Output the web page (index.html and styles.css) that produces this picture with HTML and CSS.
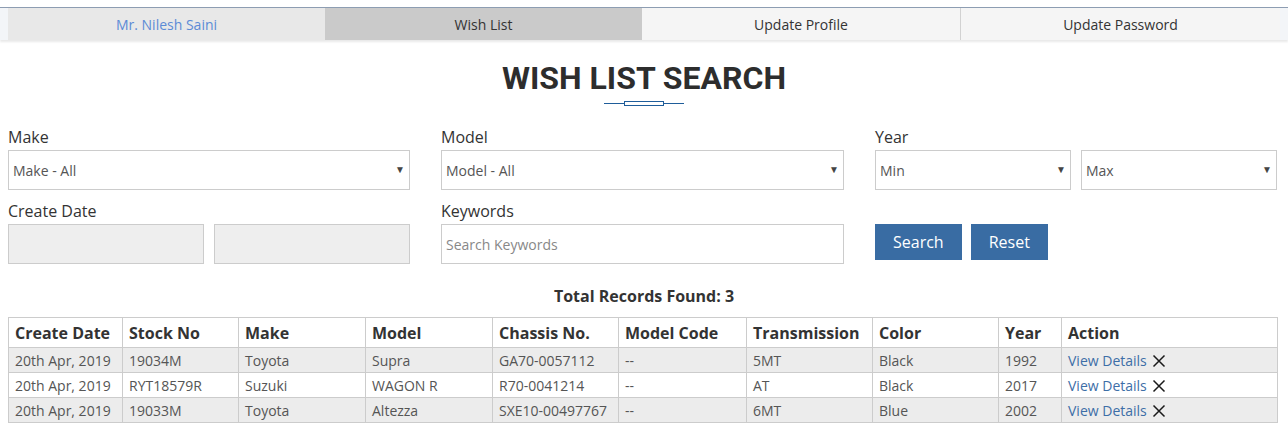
FILE: index.html
```html
<!DOCTYPE html>
<html lang="en">
<head>
  <meta charset="UTF-8" />
  <meta name="viewport" content="width=device-width, initial-scale=1.0"/>
  <title>Wish List Search</title>

  <link rel="stylesheet" href="styles.css">
</head>
<body>
  <nav class="tabs">
    <a href="#" class="tab tab-user">Mr. Nilesh Saini</a>
    <a href="#" class="tab tab-active">Wish List</a>
    <a href="#" class="tab">Update Profile</a>
    <a href="#" class="tab tab-last">Update Password</a>
  </nav>

  <header class="page-header">
    <h1>WISH LIST SEARCH</h1>
    <div class="divider"><span></span></div>
  </header>

  <form class="search-form" onsubmit="return false;">
    <div class="field">
      <label>Make</label>
      <div class="select-wrap">
        <select><option>Make - All</option></select>
      </div>
    </div>
    <div class="field">
      <label>Model</label>
      <div class="select-wrap">
        <select><option>Model - All</option></select>
      </div>
    </div>
    <div class="field">
      <label>Year</label>
      <div class="pair">
        <div class="select-wrap">
          <select><option>Min</option></select>
        </div>
        <div class="select-wrap">
          <select><option>Max</option></select>
        </div>
      </div>
    </div>

    <div class="field">
      <label>Create Date</label>
      <div class="pair">
        <input type="text" class="date-input" readonly />
        <input type="text" class="date-input" readonly />
      </div>
    </div>
    <div class="field">
      <label>Keywords</label>
      <input type="text" class="text-input" placeholder="Search Keywords" />
    </div>
    <div class="field field-actions">
      <button type="submit" class="btn">Search</button>
      <button type="reset" class="btn">Reset</button>
    </div>
  </form>

  <p class="total">Total Records Found: 3</p>

  <table class="results">
    <colgroup>
      <col class="c-date"><col class="c-stock"><col class="c-make"><col class="c-model"><col class="c-chassis">
      <col class="c-code"><col class="c-trans"><col class="c-color"><col class="c-year"><col class="c-action">
    </colgroup>
    <thead>
      <tr>
        <th>Create Date</th>
        <th>Stock No</th>
        <th>Make</th>
        <th>Model</th>
        <th>Chassis No.</th>
        <th>Model Code</th>
        <th>Transmission</th>
        <th>Color</th>
        <th>Year</th>
        <th>Action</th>
      </tr>
    </thead>
    <tbody id="rows"></tbody>
  </table>

  <script>
    const cars = [
      { date: "20th Apr, 2019", stock: "19034M", make: "Toyota", model: "Supra", chassis: "GA70-0057112", code: "--", trans: "5MT", color: "Black", year: "1992" },
      { date: "20th Apr, 2019", stock: "RYT18579R", make: "Suzuki", model: "WAGON R", chassis: "R70-0041214", code: "--", trans: "AT", color: "Black", year: "2017" },
      { date: "20th Apr, 2019", stock: "19033M", make: "Toyota", model: "Altezza", chassis: "SXE10-00497767", code: "--", trans: "6MT", color: "Blue", year: "2002" }
    ];

    const removeIcon = `<svg class="remove" width="14" height="14" viewBox="0 0 14 14"><path d="M1.5 1.5L12.5 12.5M12.5 1.5L1.5 12.5" stroke="#1a1a1a" stroke-width="1.5" fill="none"/></svg>`;

    const tbody = document.getElementById("rows");
    cars.forEach(car => {
      const tr = document.createElement("tr");
      tr.innerHTML = `
        <td>${car.date}</td>
        <td>${car.stock}</td>
        <td>${car.make}</td>
        <td>${car.model}</td>
        <td>${car.chassis}</td>
        <td>${car.code}</td>
        <td>${car.trans}</td>
        <td>${car.color}</td>
        <td>${car.year}</td>
        <td><a href="#" class="details">View Details</a> ${removeIcon}</td>
      `;
      tbody.appendChild(tr);
    });
  </script>
</body>
</html>
```

FILE: styles.css
```css
body {
  margin: 0;
  font-family: "Open Sans", Arial, sans-serif;
  color: #333;
  background: #fff;
}

/* top tabs */
.tabs {
  margin-top: 7px;
  border-top: 1px solid #8d9db2;
  background: #f3f5f8;
  padding: 0 8px;
  display: grid;
  grid-template-columns: 317px 317px 318px 320px;
  height: 32px;
  box-shadow: 0 2px 2px rgba(0,0,0,0.09);
}

.tab {
  display: flex;
  align-items: center;
  justify-content: center;
  font-size: 14px;
  color: #333;
  text-decoration: none;
  background: #f5f5f5;
}

.tab-user {
  background: #e8e8e8;
  color: #5c8bd6;
}

.tab-active {
  background: #cacaca;
}

.tab-last {
  border-left: 1px solid #d2d2d2;
}

/* title */
.page-header {
  text-align: center;
}

.page-header h1 {
  font-family: Roboto, Arial, sans-serif;
  font-weight: 700;
  font-size: 32px;
  line-height: 40px;
  margin: 18px 0 0;
  color: #2d2d2d;
}

.divider {
  position: relative;
  width: 80px;
  height: 1px;
  margin: 5px auto 0;
  background: #1f5d9a;
}

.divider span {
  position: absolute;
  left: 20px;
  top: -2px;
  width: 38px;
  height: 3px;
  border: 1px solid #1f5d9a;
  background: #fff;
}

/* form */
.search-form {
  display: grid;
  grid-template-columns: 402px 403px 402px;
  column-gap: 31px;
  row-gap: 10px;
  padding: 0 8px;
  margin-top: 22px;
}

.field label {
  display: block;
  font-size: 16px;
  line-height: 22px;
  margin-bottom: 2px;
}

.pair {
  display: grid;
  grid-template-columns: 1fr 1fr;
  gap: 10px;
}

.select-wrap {
  position: relative;
}

.select-wrap::after {
  content: "\25BC";
  position: absolute;
  right: 5px;
  top: 12px;
  font-size: 10px;
  color: #444;
  pointer-events: none;
}

select,
.text-input,
.date-input {
  display: block;
  box-sizing: border-box;
  width: 100%;
  height: 40px;
  border: 1px solid #ccc;
  border-radius: 0;
  background: #fff;
  font-family: "Open Sans", Arial, sans-serif;
  font-size: 14px;
  color: #555;
  padding: 0 4px;
  margin: 0;
  outline: none;
}

select {
  -webkit-appearance: none;
  appearance: none;
}

.date-input {
  background: #eee;
}

.text-input::placeholder {
  color: #888;
  font-size: 14px;
}

.field-actions {
  padding-top: 24px;
  display: flex;
  gap: 9px;
  align-items: flex-start;
}

.btn {
  background: #396ca3;
  color: #fff;
  border: none;
  height: 36px;
  padding: 0 18px;
  font-family: "Open Sans", Arial, sans-serif;
  font-size: 16px;
  cursor: pointer;
}

/* results */
.total {
  text-align: center;
  font-weight: 700;
  font-size: 16px;
  margin: 21px 0 0;
  line-height: 22px;
}

.results {
  margin: 10px 8px 0;
  width: 1269px;
  border-collapse: collapse;
  table-layout: fixed;
}

.c-date { width: 114px; }
.c-stock { width: 116px; }
.c-make { width: 127px; }
.c-model { width: 127px; }
.c-chassis { width: 126px; }
.c-code { width: 128px; }
.c-trans { width: 126px; }
.c-color { width: 126px; }
.c-year { width: 63px; }
.c-action { width: 216px; }

.results th,
.results td {
  border: 1px solid #ccc;
  text-align: left;
  padding: 0 6px;
  white-space: nowrap;
}

.results th {
  font-size: 16px;
  height: 29px;
  font-weight: 700;
  color: #333;
}

.results td {
  font-size: 14px;
  height: 24px;
  color: #555;
}

.results tbody tr:nth-child(odd) {
  background: #ececec;
}

.details {
  color: #3d6ea7;
  text-decoration: none;
}

.remove {
  vertical-align: -2px;
  margin-left: 2px;
}
```
